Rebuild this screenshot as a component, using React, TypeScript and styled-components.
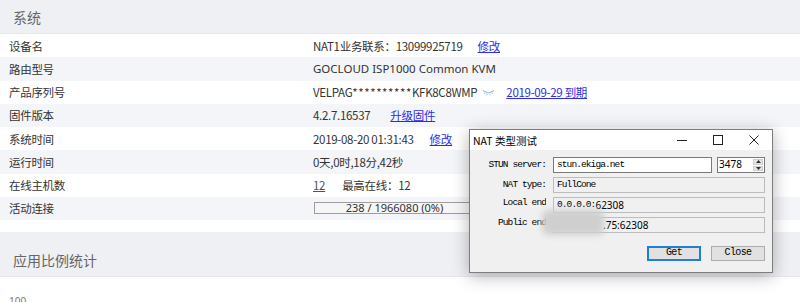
import React from "react";
import styled, { createGlobalStyle } from "styled-components";

const GlobalStyle = createGlobalStyle`
  html, body { margin: 0; padding: 0; background: #fff; }
  body {
    font-family: "Noto Sans", "Noto Sans CJK SC", sans-serif;
    width: 800px;
    height: 302px;
    overflow: hidden;
  }
`;

const Page = styled.div`
  position: relative;
  width: 800px;
  height: 302px;
  overflow: hidden;
  background: #eff0f3;
  display: flex;
  flex-direction: column;
  gap: 11px;
`;

const Panel = styled.section<{ $pb: number }>`
  background: #fff;
  display: flex;
  flex-direction: column;
  padding-bottom: ${(p) => p.$pb}px;
`;

const PanelHeader = styled.div`
  height: 33px;
  border-bottom: 1px solid #e6e7eb;
  background: #eff0f4;
  display: flex;
  align-items: center;
  padding-left: 13px;
  font-size: 14px;
  color: #666;
  font-family: "Noto Sans CJK SC", sans-serif;
`;

const Row = styled.div<{ $striped: boolean }>`
  height: 23.25px;
  display: grid;
  grid-template-columns: 304px 1fr;
  align-items: center;
  padding-left: 9px;
  background: ${(p) => (p.$striped ? "#f4f5f8" : "#fff")};
  font-size: 11.5px;
  letter-spacing: -0.3px;
  color: #333;
  font-family: "Noto Sans CJK SC", sans-serif;
`;

const Label = styled.div`
  white-space: nowrap;
`;

const Value = styled.div`
  display: flex;
  align-items: center;
  white-space: nowrap;
`;

const Link = styled.a<{ $ml?: number }>`
  margin-left: ${(p) => p.$ml ?? 0}px;
  color: #2c2ce6;
  text-decoration: underline;
  cursor: pointer;
`;

const GrayLink = styled.a`
  color: #555;
  text-decoration: underline;
`;

const Plain = styled.span<{ $ml?: number }>`
  margin-left: ${(p) => p.$ml ?? 0}px;
`;

const Latin = styled.span`
  font-family: "Noto Sans", sans-serif;
  letter-spacing: 0;
`;

const Mask = styled.span`
  letter-spacing: 0.6px;
`;

const EyeIcon = styled.svg`
  margin-left: 5px;
  width: 13px;
  height: 7px;
  flex: none;
`;

const Progress = styled.div`
  box-sizing: border-box;
  width: 161px;
  height: 12px;
  margin-left: 1px;
  border: 1px solid #9d9d9d;
  background: #f6f6f6;
  font-size: 11px;
  letter-spacing: 0;
  line-height: 10px;
  text-align: center;
  color: #333;
  font-family: "Noto Sans", sans-serif;
`;

const ChartArea = styled.div`
  padding: 18px 0 0 9px;
  font-size: 10px;
  line-height: 12px;
  color: #777;
  height: 40px;
`;

/* ---------- dialog ---------- */

const Dialog = styled.div`
  position: absolute;
  left: 469px;
  top: 129px;
  width: 304px;
  height: 144px;
  box-sizing: border-box;
  border: 1px solid #7d7d7d;
  background: #f0f0f0;
  box-shadow: 0 3px 16px rgba(0, 0, 0, 0.3);
  display: flex;
  flex-direction: column;
`;

const TitleBar = styled.div`
  height: 20px;
  background: #fff;
  display: flex;
  align-items: center;
  flex: none;
`;

const Title = styled.div`
  padding-left: 3px;
  font-size: 10.5px;
  color: #000;
  font-family: "Noto Sans CJK SC", sans-serif;
  flex: 1;
`;

const WinButton = styled.div`
  width: 36px;
  height: 20px;
  display: flex;
  align-items: center;
  justify-content: center;
`;

const DialogBody = styled.div`
  padding: 7px 7px 0 0;
  display: grid;
  grid-template-columns: 76px 212px;
  column-gap: 7px;
  row-gap: 4px;
  font-family: "Liberation Mono", monospace;
  font-size: 9.5px;
  letter-spacing: -0.9px;
  color: #000;
`;

const DLabel = styled.div<{ $up?: number }>`
  text-align: right;
  white-space: nowrap;
  overflow: hidden;
  height: 16px;
  line-height: ${(p) => 16 - (p.$up ?? 0) * 2}px;
`;

const FieldLine = styled.div`
  display: flex;
  gap: 5px;
`;

const Field = styled.div<{ $ro?: boolean; $w?: number }>`
  box-sizing: border-box;
  height: 16px;
  width: ${(p) => (p.$w ? `${p.$w}px` : "100%")};
  border: 1px solid ${(p) => (p.$ro ? "#bcbcbc" : "#7a7a7a")};
  background: ${(p) => (p.$ro ? "#f0f0f0" : "#fff")};
  padding-left: 3px;
  line-height: 14px;
  white-space: nowrap;
  overflow: hidden;
  display: flex;
  align-items: center;
`;

const Sans = styled.span<{ $ml?: number }>`
  font-family: "Noto Sans", sans-serif;
  font-size: 10px;
  letter-spacing: 0;
  margin-left: ${(p) => p.$ml ?? 0}px;
`;

const Spin = styled.div`
  box-sizing: border-box;
  width: 48px;
  height: 16px;
  border: 1px solid #7a7a7a;
  background: #fff;
  display: flex;
  align-items: stretch;
`;

const SpinText = styled.div`
  flex: 1;
  padding-left: 1px;
  font-family: "Noto Sans", sans-serif;
  font-size: 10px;
  letter-spacing: 0;
  line-height: 12px;
`;

const SpinArrows = styled.div`
  width: 10px;
  margin: 1px;
  display: flex;
  flex-direction: column;
  gap: 1px;
`;

const SpinHalf = styled.div`
  flex: 1;
  background: #e5e5e5;
  border: 1px solid #cfcfcf;
  display: flex;
  align-items: center;
  justify-content: center;
`;

const Blur = styled.div`
  position: absolute;
  left: 72px;
  top: 80px;
  width: 62px;
  height: 25px;
  background: #cfcfcf;
  border-radius: 6px;
  filter: blur(3px);
`;

const ButtonRow = styled.div`
  margin-top: 13px;
  padding-right: 7px;
  display: flex;
  justify-content: flex-end;
  gap: 10px;
`;

const WinBtn = styled.div<{ $focus?: boolean }>`
  box-sizing: border-box;
  width: 54px;
  height: 15px;
  border: 1px solid ${(p) => (p.$focus ? "#1f7fd6" : "#adadad")};
  box-shadow: ${(p) => (p.$focus ? "inset 0 0 0 1px #1f7fd6" : "none")};
  background: #e1e1e1;
  font-family: "Liberation Mono", monospace;
  font-size: 10px;
  letter-spacing: -0.6px;
  line-height: 12px;
  text-align: center;
  color: #000;
`;

const rows: { label: string; value: React.ReactNode }[] = [
  {
    label: "设备名",
    value: (
      <>
        <span>NAT1业务联系：13099925719</span>
        <Link $ml={15}>修改</Link>
      </>
    ),
  },
  {
    label: "路由型号",
    value: <Latin>GOCLOUD ISP1000 Common KVM</Latin>,
  },
  {
    label: "产品序列号",
    value: (
      <>
        <span>
          VELPAG<Mask>**********</Mask>KFK8C8WMP
        </span>
        <EyeIcon viewBox="0 0 13 7">
          <path d="M1 1.5 Q6.5 6 12 1.5" fill="none" stroke="#9cc3e6" strokeWidth="1.1" />
          <path d="M3 3.6 L2.2 5.2 M5.2 4.6 L4.9 6.4 M7.8 4.6 L8.1 6.4 M10 3.6 L10.8 5.2" stroke="#9cc3e6" strokeWidth="0.9" />
        </EyeIcon>
        <Link $ml={11}>2019-09-29 到期</Link>
      </>
    ),
  },
  {
    label: "固件版本",
    value: (
      <>
        <span>4.2.7.16537</span>
        <Link $ml={20}>升级固件</Link>
      </>
    ),
  },
  {
    label: "系统时间",
    value: (
      <>
        <span>2019-08-20 01:31:43</span>
        <Link $ml={16}>修改</Link>
      </>
    ),
  },
  { label: "运行时间", value: <span>0天,0时,18分,42秒</span> },
  {
    label: "在线主机数",
    value: (
      <>
        <GrayLink>12</GrayLink>
        <Plain $ml={17}>最高在线：12</Plain>
      </>
    ),
  },
  { label: "活动连接", value: <Progress>238 / 1966080 (0%)</Progress> },
];

export default function App() {
  return (
    <>
      <GlobalStyle />
      <Page>
        <Panel $pb={12}>
          <PanelHeader>系统</PanelHeader>
          {rows.map((r, i) => (
            <Row key={r.label} $striped={i % 2 === 1}>
              <Label>{r.label}</Label>
              <Value>{r.value}</Value>
            </Row>
          ))}
        </Panel>
        <Panel $pb={0}>
          <PanelHeader>应用比例统计</PanelHeader>
          <ChartArea>100</ChartArea>
        </Panel>

        <Dialog>
          <TitleBar>
            <Title>NAT 类型测试</Title>
            <WinButton>
              <svg width="10" height="10" viewBox="0 0 10 10">
                <path d="M0 5.5 H10" stroke="#222" strokeWidth="1" />
              </svg>
            </WinButton>
            <WinButton>
              <svg width="10" height="10" viewBox="0 0 10 10">
                <rect x="0.5" y="0.5" width="9" height="9" fill="none" stroke="#222" strokeWidth="1" />
              </svg>
            </WinButton>
            <WinButton>
              <svg width="10" height="10" viewBox="0 0 10 10">
                <path d="M0.5 0.5 L9.5 9.5 M9.5 0.5 L0.5 9.5" stroke="#222" strokeWidth="1" />
              </svg>
            </WinButton>
          </TitleBar>
          <DialogBody>
            <DLabel>STUN server:</DLabel>
            <FieldLine>
              <Field $w={159}>stun.ekiga.net</Field>
              <Spin>
                <SpinText>3478</SpinText>
                <SpinArrows>
                  <SpinHalf>
                    <svg width="5" height="3" viewBox="0 0 5 3">
                      <path d="M0 3 L2.5 0 L5 3 Z" fill="#333" />
                    </svg>
                  </SpinHalf>
                  <SpinHalf>
                    <svg width="5" height="3" viewBox="0 0 5 3">
                      <path d="M0 0 L2.5 3 L5 0 Z" fill="#333" />
                    </svg>
                  </SpinHalf>
                </SpinArrows>
              </Spin>
            </FieldLine>
            <DLabel>NAT type:</DLabel>
            <Field $ro>FullCone</Field>
            <DLabel $up={2}>Local end</DLabel>
            <Field $ro>
              0.0.0.0:<Sans>62308</Sans>
            </Field>
            <DLabel $up={2}>Public end</DLabel>
            <Field $ro>
              <Sans $ml={46}>.75:62308</Sans>
            </Field>
          </DialogBody>
          <ButtonRow>
            <WinBtn $focus>Get</WinBtn>
            <WinBtn>Close</WinBtn>
          </ButtonRow>
          <Blur />
        </Dialog>
      </Page>
    </>
  );
}
